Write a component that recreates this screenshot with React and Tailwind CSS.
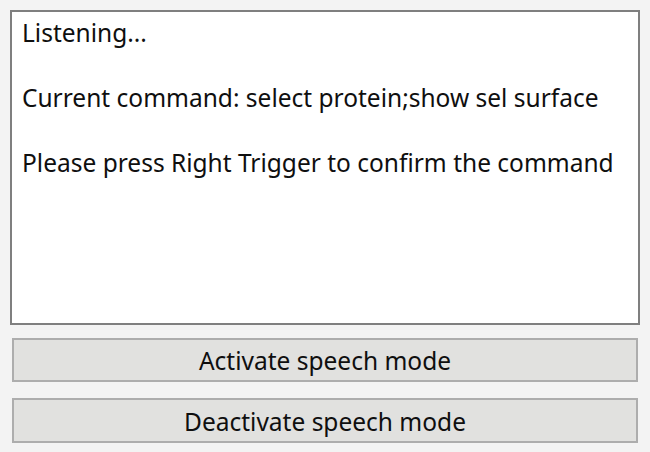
export default function App() {
  const font = { fontFamily: '"Noto Sans", "Open Sans", sans-serif' };
  return (
    <div className="w-[650px] h-[452px] bg-[#f3f3f3] flex flex-col pt-[10px] px-[10px]" style={font}>
      <div className="h-[315px] bg-white border-2 border-[#7f7f7f] pl-[10px] pt-[5px] text-[24.5px] leading-[32.5px] text-[#0f0f0f] whitespace-pre-line">
        {"Listening...\n\nCurrent command: select protein;show sel surface\n\nPlease press Right Trigger to confirm the command"}
      </div>
      <div className="mx-[2px] mt-[13px] h-[44px] bg-[#e1e1df] border-2 border-[#adadad] flex items-center justify-center pt-[3px] text-[24.5px] text-[#0f0f0f]">
        Activate speech mode
      </div>
      <div className="mx-[2px] mt-[16px] h-[45px] bg-[#e1e1df] border-2 border-[#adadad] flex items-center justify-center pt-[3px] text-[24.5px] text-[#0f0f0f]">
        Deactivate speech mode
      </div>
    </div>
  );
}
